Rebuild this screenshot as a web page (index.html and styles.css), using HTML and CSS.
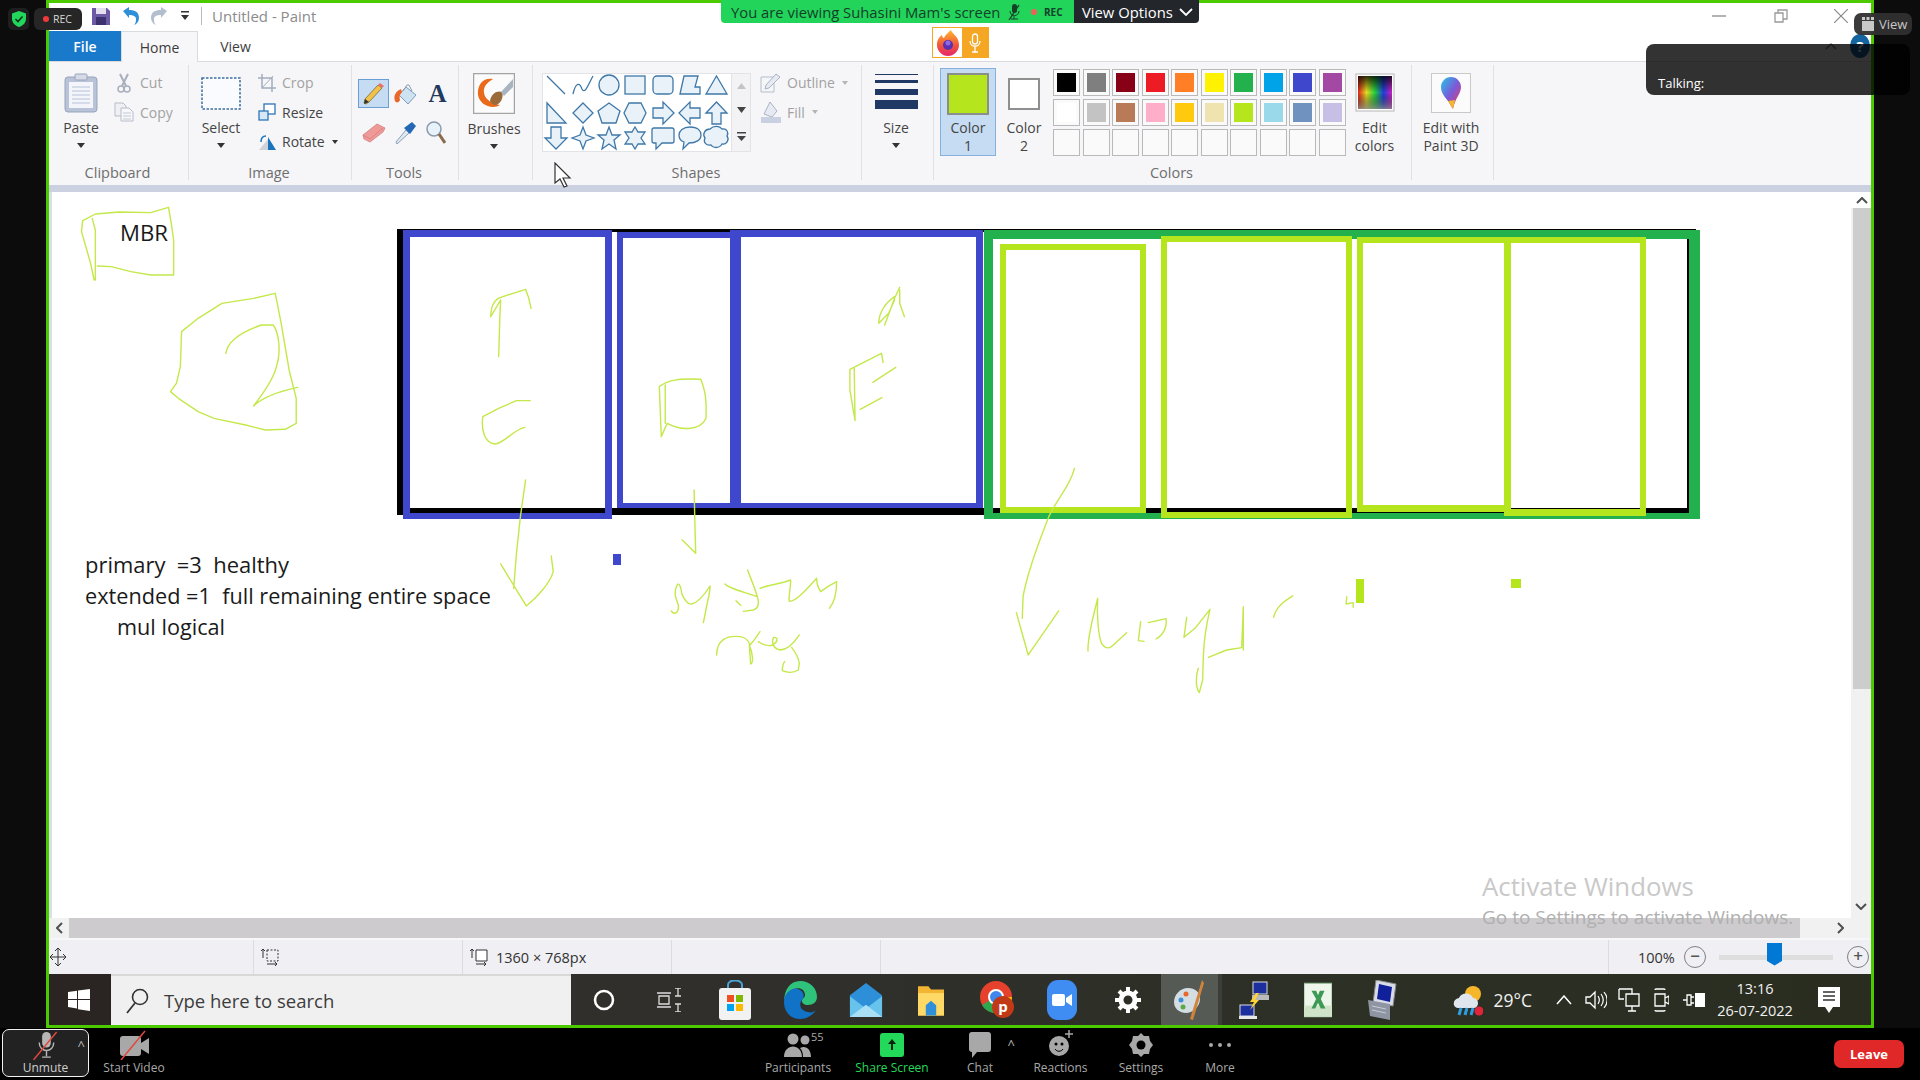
FILE: index.html
```html
<!DOCTYPE html>
<html lang="en">
<head>
    <meta charset="UTF-8">
    <title>Zoom - Untitled - Paint</title>
    <link rel="stylesheet" href="styles.css">
</head>
<body>
<div class="page">
    <div class="screen">
        <div class="titlebar">
            <svg class="qat-save" width="18" height="18" viewBox="0 0 18 18"><path d="M0 1h15l3 3v14H0z" fill="#6d5aa6"/><rect x="4" y="1" width="10" height="6" fill="#e4e0f0"/><rect x="4" y="10" width="10" height="8" fill="#3d3170"/></svg>
            <svg class="qat-undo" width="18" height="18" viewBox="0 0 18 18"><path d="M1 4l6-4v3c6 0 10 2 10 8 0 3-2 6-5 7 2-2 2-4 2-6 0-3-3-4-7-4v3z" fill="#2f8fd8"/></svg>
            <svg class="qat-redo" width="18" height="18" viewBox="0 0 18 18"><path d="M17 4l-6-4v3C5 3 1 5 1 11c0 3 2 6 5 7-2-2-2-4-2-6 0-3 3-4 7-4v3z" fill="#b3bfcf"/></svg>
            <svg class="qat-more" width="8" height="10" viewBox="0 0 8 10"><path d="M0 0h8v1.5H0zM0 4h8L4 9z" fill="#333"/></svg>
            <span class="title-sep"></span>
            <span class="title-text">Untitled - Paint</span>
            <div class="window-btns">
                <div class="window-btn window-min"><svg width="14" height="14" viewBox="0 0 14 14"><path d="M0 7h14" stroke="#9a9a9a" stroke-width="1.5"/></svg></div>
                <div class="window-btn"><svg width="14" height="14" viewBox="0 0 14 14"><path d="M1 4h8v9H1zM4 4V1h9v9H9" fill="none" stroke="#9a9a9a" stroke-width="1.3"/></svg></div>
                <div class="window-btn"><svg width="14" height="14" viewBox="0 0 14 14"><path d="M0 0l14 14M14 0L0 14" stroke="#8a8a8a" stroke-width="1.2"/></svg></div>
            </div>
        </div>

        <div class="tabs">
            <div class="tab tab-file">File</div>
            <div class="tab tab-home">Home</div>
            <div class="tab tab-view">View</div>
            <svg class="ribbon-collapse" width="12" height="7" viewBox="0 0 12 7"><path d="M1 6l5-5 5 5" fill="none" stroke="#777" stroke-width="1.3"/></svg>
            <div class="help">?</div>
        </div>

        <div class="ribbon">
            <div class="group group-clipboard">
                <div class="group-body">
                    <div class="big big-clipboard">
                        <svg width="34" height="40" viewBox="0 0 34 40"><rect x="1" y="4" width="32" height="35" rx="3" fill="#b9c3d8" stroke="#98a4bd"/><rect x="5" y="9" width="24" height="26" fill="#f3f5fa"/><path d="M8 14h18M8 18h18M8 22h18M8 26h18M8 30h18" stroke="#b7c2d8"/><rect x="11" y="1" width="12" height="6" rx="1" fill="#d5dae6" stroke="#98a4bd"/></svg>
                        <span class="big-label">Paste</span>
                        <span class="caret"></span>
                    </div>
                    <div class="small-list list-clipboard">
                        <div class="small off"><svg width="20" height="20" viewBox="0 0 20 20"><path d="M6 1l6 12M14 1L8 13" stroke="#a9afbb" stroke-width="2"/><circle cx="7" cy="16" r="3" fill="none" stroke="#a9afbb" stroke-width="1.5"/><circle cx="13" cy="16" r="3" fill="none" stroke="#a9afbb" stroke-width="1.5"/></svg>Cut</div>
                        <div class="small off"><svg width="20" height="20" viewBox="0 0 20 20"><path d="M1 1h8l3 3v10H1z" fill="#eef0f4" stroke="#b6bcc8"/><path d="M7 6h8l4 4v9H7z" fill="#f7f8fa" stroke="#b6bcc8"/><path d="M9 11h8M9 14h8M9 17h8" stroke="#c4c9d3"/></svg>Copy</div>
                    </div>
                </div>
                <div class="group-label">Clipboard</div>
            </div>

            <div class="group group-image">
                <div class="group-body">
                    <div class="big big-select">
                        <svg width="40" height="40" viewBox="0 0 40 40"><rect x="1" y="5" width="38" height="31" fill="#f9fbfe" stroke="#3f6f9f" stroke-width="1.5" stroke-dasharray="2.5 1.5"/></svg>
                        <span class="big-label">Select</span>
                        <span class="caret"></span>
                    </div>
                    <div class="small-list list-image">
                        <div class="small off"><svg width="18" height="18" viewBox="0 0 18 18"><path d="M4 0v14h14M0 4h14v14" fill="none" stroke="#a3adbb" stroke-width="1.5"/><path d="M15 2L4 14" stroke="#a3adbb"/></svg>Crop</div>
                        <div class="small"><svg width="18" height="18" viewBox="0 0 18 18"><rect x="6" y="1" width="11" height="10" fill="#fff" stroke="#2e75b6" stroke-width="1.3"/><rect x="1" y="8" width="9" height="9" fill="#d6e8f7" stroke="#2e75b6" stroke-width="1.3"/></svg>Resize</div>
                        <div class="small"><svg width="18" height="18" viewBox="0 0 18 18"><path d="M1 17L11 5v12z" fill="#cfd3d8"/><path d="M10 4l8 13h-8z" fill="#1c75bc"/><path d="M3 9c0-4 2-6 5-6" fill="none" stroke="#1c75bc" stroke-width="1.5"/></svg>Rotate<span class="caret caret-inline"></span></div>
                    </div>
                </div>
                <div class="group-label">Image</div>
            </div>

            <div class="group group-tools">
                <div class="group-body">
                    <div class="tool-grid">
                        <div class="tool tool-on"><svg width="24" height="24" viewBox="0 0 24 24"><path d="M4 22l-2-1 1-4L16 3l4 3L7 20z" fill="#f0c24a" stroke="#7d6a35" stroke-width=".8"/><path d="M16 3l2-2 4 3-2 2z" fill="#e8706a"/><path d="M2 22l1-5 4 3z" fill="#333"/></svg></div>
                        <div class="tool"><svg width="24" height="24" viewBox="0 0 24 24"><path d="M12 5l10 8-8 9-9-9z" fill="#cfe2f2" stroke="#7a9dbd"/><path d="M9 9l4-6 2 0 3 6" fill="none" stroke="#8a9bb0"/><path d="M1 19C-1 14 2 9 7 7l1 3C6 12 5 15 6 18c-1 3-4 3-5 1z" fill="#e8672a"/></svg></div>
                        <div class="tool"><span class="text-tool">A</span></div>
                        <div class="tool"><svg width="24" height="20" viewBox="0 0 24 20"><path d="M1 12L15 1l8 4-2 4L8 19l-6-3z" fill="#f09a98" stroke="#d27d7d" stroke-width=".8"/><path d="M1 12l7 4 13-11" fill="none" stroke="#d27d7d" stroke-width=".8"/></svg></div>
                        <div class="tool"><svg width="22" height="24" viewBox="0 0 22 24"><path d="M2 23l-1-2 10-12 3 3z" fill="#dfeaf2" stroke="#8aa0b5"/><path d="M9 7l8-6 4 4-6 8z" fill="#2268b4"/></svg></div>
                        <div class="tool tool-mag"><svg width="20" height="24" viewBox="0 0 20 24"><circle cx="8" cy="8" r="7" fill="#e8f2fa" stroke="#8a9aa8" stroke-width="1.5"/><path d="M13 13l6 9" stroke="#8a6a4a" stroke-width="3"/></svg></div>
                    </div>
                </div>
                <div class="group-label">Tools</div>
            </div>

            <div class="group group-brushes">
                <div class="group-body">
                    <div class="big big-brushes">
                        <svg width="42" height="41" viewBox="0 0 42 41"><rect x=".5" y=".5" width="41" height="40" fill="#fbfbfb" stroke="#a4a4a4" stroke-width="1.5"/><path d="M20 6C10 4 4 12 5 22c1 7 8 12 15 12 3 0 5-1 7-2-7-1-15-5-16-12-1-7 4-11 9-14z" fill="#ea6a1c"/><path d="M17 28c1-8 8-11 12-9 2 4-1 12-6 13-3 0-5-2-6-4z" fill="#9a6a3a"/><path d="M28 19L40 6v8L31 23z" fill="#a8b4c0"/></svg>
                        <span class="big-label">Brushes</span>
                        <span class="caret"></span>
                    </div>
                </div>
                <div class="group-label">&nbsp;</div>
            </div>

            <div class="group group-shapes">
                <div class="group-body">
                    <div class="gallery">
                        <svg width="189" height="79" viewBox="0 0 189 79" class="gallery-shapes">
                            <path d="M5 3L23 21M31 21C34 8 38 10 40 16C43 22 47 10 51 3"/>
                            <circle cx="67" cy="12" r="10"/>
                            <rect x="83" y="3" width="20" height="18"/>
                            <rect x="111" y="3" width="20" height="18" rx="4"/>
                            <path d="M138 21L142 3L156 3L153 14L158 14L158 21Z"/>
                            <path d="M174.5 3L185 21L164 21Z"/>
                            <path d="M5 30L5 50L24 50Z"/>
                            <path d="M41 30L51 40L41 50L31 40Z"/>
                            <path d="M67 30L78 38L74 50L60 50L56 38Z"/>
                            <path d="M87 30L99 30L104 40L99 50L87 50L82 40Z"/>
                            <path d="M111 35L121 35L121 29L132 40L121 51L121 45L111 45Z"/>
                            <path d="M158 35L148 35L148 29L137 40L148 51L148 45L158 45Z"/>
                            <path d="M164 40L174.5 29L185 40L179 40L179 51L170 51L170 40Z"/>
                            <path d="M9 54L19 54L19 65L25 65L14 76L3 65L9 65Z"/>
                            <path d="M41 54L44 62L52 65L44 68L41 76L38 68L30 65L38 62Z"/>
                            <path d="M67 54L70 62L78 62L72 67L74 76L67 71L60 76L62 67L56 62L64 62Z"/>
                            <path d="M93 54L96 59L103 59L99 65L103 71L96 71L93 76L90 71L83 71L87 65L83 59L90 59Z"/>
                            <path d="M112 55H130Q132 55 132 57V68Q132 70 130 70H120L114 76V70H112Q110 70 110 68V57Q110 55 112 55Z"/>
                            <path d="M148 54C156 54 159 58 159 62C159 67 154 70 147 70L141 76L142 69C139 68 137 65 137 62C137 58 141 54 148 54Z"/>
                            <path d="M168 56C172 52 178 53 180 56C185 55 187 60 185 63C188 67 184 72 180 71C177 76 171 75 169 72C164 73 161 69 163 65C160 61 163 56 168 56Z"/>
                        </svg>
                        <div class="gallery-scroll">
                            <svg width="9" height="6" viewBox="0 0 9 6"><path d="M4.5 0L9 6H0z" fill="#c4c4c4"/></svg>
                            <svg width="9" height="6" viewBox="0 0 9 6"><path d="M0 0h9L4.5 6z" fill="#444"/></svg>
                            <svg width="9" height="10" viewBox="0 0 9 10"><path d="M0 0h9v1.5H0zM0 4h9L4.5 9z" fill="#444"/></svg>
                        </div>
                    </div>
                    <div class="small-list list-shapes">
                        <div class="small off"><svg width="21" height="20" viewBox="0 0 21 20"><path d="M1 4h13v15H1z" fill="#f5f6f8" stroke="#b4bccb"/><path d="M5 16l1-4L16 1l4 3L9 15z" fill="#e6eaf2" stroke="#aab3c4"/></svg>Outline<span class="caret caret-inline caret-off"></span></div>
                        <div class="small off"><svg width="21" height="22" viewBox="0 0 21 22"><path d="M10 1l7 9-5 6-8-3z" fill="#e6eaf2" stroke="#aab3c4"/><rect x="1" y="16" width="20" height="6" fill="#c8d0e2"/></svg>Fill<span class="caret caret-inline caret-off"></span></div>
                    </div>
                </div>
                <div class="group-label">Shapes</div>
            </div>

            <div class="group group-size">
                <div class="group-body">
                    <div class="big big-size">
                        <div class="size-lines">
                            <span class="size-line size-1"></span>
                            <span class="size-line size-2"></span>
                            <span class="size-line size-3"></span>
                            <span class="size-line size-4"></span>
                        </div>
                        <span class="big-label">Size</span>
                        <span class="caret"></span>
                    </div>
                </div>
                <div class="group-label">&nbsp;</div>
            </div>

            <div class="group group-colors">
                <div class="group-body">
                    <div class="color-btn color-on">
                        <span class="swatch-big"></span>
                        <span class="big-label">Color<br>1</span>
                    </div>
                    <div class="color-btn">
                        <span class="swatch-small"></span>
                        <span class="big-label">Color<br>2</span>
                    </div>
                    <div class="palette">
                        <span class="cell"><i style="background:#000000"></i></span>
                        <span class="cell"><i style="background:#7f7f7f"></i></span>
                        <span class="cell"><i style="background:#880015"></i></span>
                        <span class="cell"><i style="background:#ed1c24"></i></span>
                        <span class="cell"><i style="background:#ff7f27"></i></span>
                        <span class="cell"><i style="background:#fff200"></i></span>
                        <span class="cell"><i style="background:#22b14c"></i></span>
                        <span class="cell"><i style="background:#00a2e8"></i></span>
                        <span class="cell"><i style="background:#3f48cc"></i></span>
                        <span class="cell"><i style="background:#a349a4"></i></span>
                        <span class="cell"><i style="background:#ffffff"></i></span>
                        <span class="cell"><i style="background:#c3c3c3"></i></span>
                        <span class="cell"><i style="background:#b97a57"></i></span>
                        <span class="cell"><i style="background:#ffaec9"></i></span>
                        <span class="cell"><i style="background:#ffc90e"></i></span>
                        <span class="cell"><i style="background:#efe4b0"></i></span>
                        <span class="cell"><i style="background:#b5e61d"></i></span>
                        <span class="cell"><i style="background:#99d9ea"></i></span>
                        <span class="cell"><i style="background:#7092be"></i></span>
                        <span class="cell"><i style="background:#c8bfe7"></i></span>
                        <span class="cell"></span><span class="cell"></span><span class="cell"></span><span class="cell"></span><span class="cell"></span>
                        <span class="cell"></span><span class="cell"></span><span class="cell"></span><span class="cell"></span><span class="cell"></span>
                    </div>
                    <div class="big big-edit">
                        <svg width="40" height="40" viewBox="0 0 40 40"><defs><linearGradient id="hues" x1="0" x2="1" y1="0" y2="0"><stop offset="0" stop-color="#e02020"/><stop offset=".25" stop-color="#e8e020"/><stop offset=".5" stop-color="#20d040"/><stop offset=".75" stop-color="#2040e0"/><stop offset="1" stop-color="#d020c0"/></linearGradient><linearGradient id="shade" x1="0" x2="0" y1="0" y2="1"><stop offset="0" stop-color="#000" stop-opacity=".8"/><stop offset=".5" stop-color="#000" stop-opacity="0"/><stop offset="1" stop-color="#888" stop-opacity=".8"/></linearGradient></defs><rect x="1" y="1" width="38" height="37" fill="#fff" stroke="#b5b5b5"/><rect x="3" y="3" width="34" height="33" fill="url(#hues)"/><rect x="3" y="3" width="34" height="33" fill="url(#shade)"/></svg>
                        <span class="big-label">Edit<br>colors</span>
                    </div>
                </div>
                <div class="group-label">Colors</div>
            </div>

            <div class="group group-paint3d">
                <div class="group-body">
                    <div class="big big-paint3d">
                        <svg width="40" height="40" viewBox="0 0 40 40"><defs><linearGradient id="drop" x1="0" x2="1" y1="0" y2="1"><stop offset="0" stop-color="#22c8e8"/><stop offset=".5" stop-color="#7a5ad8"/><stop offset="1" stop-color="#f03a5a"/></linearGradient></defs><rect x=".5" y=".5" width="39" height="39" fill="#fbfbfb" stroke="#c9c9c9"/><path d="M20 4c6 0 10 5 10 10 0 7-6 11-8 22-2-3-3-5-5-8-3-4-7-8-7-14C10 9 14 4 20 4z" fill="url(#drop)"/><path d="M17 28l5 8 2-9z" fill="#f6b62a"/></svg>
                        <span class="big-label">Edit with<br>Paint 3D</span>
                    </div>
                </div>
                <div class="group-label">&nbsp;</div>
            </div>
        </div>

        <div class="ribbon-edge"></div>

        <div class="canvas-row">
            <div class="canvas">
                <svg class="drawing" width="1799" height="726" viewBox="52 192 1799 726">
                    <rect class="fill-black" x="397" y="229" width="1299" height="286"/>
                    <rect class="fill-white" x="407" y="232" width="1280" height="276"/>

                    <path class="fill-blue" fill-rule="evenodd" d="M403 230H612V519H403ZM410 237V508H605V237Z"/>
                    <path class="fill-blue" fill-rule="evenodd" d="M617 232H741V508H617ZM623 238V503H730V238Z"/>
                    <path class="fill-blue" fill-rule="evenodd" d="M730 230H983V508H730ZM741 237V503H976V237Z"/>
                    <rect class="fill-black" x="410" y="508" width="195" height="5"/>
                    <path class="fill-green" fill-rule="evenodd" d="M984 230H1700V519H984ZM993 239V513H1689V239Z"/>
                    <rect class="fill-black" x="993" y="508" width="696" height="5"/>
                    <path class="fill-lime" fill-rule="evenodd" d="M1000 244H1146V513H1000ZM1006 250V507H1140V250Z"/>
                    <path class="fill-lime" fill-rule="evenodd" d="M1161 236H1352V518H1161ZM1167 242V512H1346V242Z"/>
                    <path class="fill-lime" fill-rule="evenodd" d="M1357 237H1510V512H1357ZM1363 243V505H1504V243Z"/>
                    <path class="fill-lime" fill-rule="evenodd" d="M1504 237H1646V516H1504ZM1511 243V509H1640V243Z"/>
                    <rect class="fill-blue" x="613" y="554" width="8" height="11"/>
                    <rect class="fill-lime" x="1356" y="579" width="8" height="24"/>
                    <rect class="fill-lime" x="1511" y="579" width="10" height="9"/>

                    <g class="ink" transform="translate(40 190) scale(.3954 .3333)">
                        <path d="M137 270L128 220L105 125L108 92L140 72L200 66L280 68L325 52L332 100L338 150L338 255L280 255L230 245L180 230L145 228M132 85L140 120L140 270"/>
                        <path d="M595 310L540 325L460 340L400 385L358 425L355 530L345 580L330 605L350 625L400 665L440 685L520 705L570 720L620 718L648 700L648 625L630 540L610 400L595 310"/>
                        <path d="M470 490C475 450 510 425 560 405L590 405C605 430 610 490 598 530C590 570 565 610 540 648C560 625 600 605 652 592"/>
                        <path d="M1160 500L1163 380L1165 330M1140 380C1140 340 1155 325 1165 322L1228 298L1235 320L1242 355M1140 380L1165 330"/>
                        <path d="M1240 632L1205 632L1160 655L1120 680C1115 720 1125 760 1150 762C1175 760 1195 720 1226 712"/>
                        <path d="M1228 870L1215 980L1205 1090L1198 1195M1165 1122L1200 1190L1230 1248C1255 1225 1290 1180 1298 1145L1293 1098"/>
                    </g>
                    <g class="ink" transform="translate(600 210) scale(.3954 .3333)">
                        <path d="M155 680L150 530C170 510 200 505 255 508C265 540 270 560 268 625C255 660 210 665 170 640L155 680M165 525L165 640"/>
                        <path d="M238 840L240 940L242 1030L208 990"/>
                        <path d="M758 232L745 265L720 345M745 260C720 280 705 310 705 340L730 310L745 270M758 240L758 280L770 320"/>
                        <path d="M645 632L632 540L632 478L712 430L716 458M643 475L645 630M690 517L748 472M658 598L713 563"/>
                        <path d="M1200 775C1190 825 1160 860 1135 920C1105 1010 1080 1090 1070 1160L1068 1225M1053 1208L1083 1335L1160 1203"/>
                    </g>
                    <g class="ink" transform="translate(660 560) scale(.3333)">
                        <path d="M34 153C42 165 58 160 55 135C48 115 40 100 50 78C55 65 62 75 65 100C72 120 85 135 95 132C110 128 130 110 150 78C152 95 140 130 135 165L130 188"/>
                        <path d="M263 30C270 50 285 85 292 110C298 130 295 145 280 150L250 154M228 122L242 136M195 72C205 85 250 95 292 110M300 85C325 75 360 72 392 60C392 85 385 110 388 124C405 125 430 100 470 55C470 70 475 85 482 95C495 85 510 75 530 65C530 95 525 125 508 145"/>
                        <path d="M170 285C170 240 200 225 240 230C258 232 265 240 270 255C280 245 290 230 300 215M268 255L272 312C280 310 280 285 268 255M295 245C310 255 325 260 338 255C355 245 355 232 342 232C335 240 335 265 360 270C385 270 405 245 418 225M395 262C405 275 415 290 418 310L415 330C400 340 380 338 367 332C367 320 370 310 374 305"/>
                    </g>
                    <g class="ink" transform="translate(1080 580) scale(.3333)">
                        <path d="M24 213C22 170 40 110 53 55C50 100 55 170 65 190C78 210 90 205 100 195L140 158"/>
                        <path d="M182 125L175 182L192 184M205 128L258 116C262 140 250 165 228 177"/>
                        <path d="M320 112L312 172L345 145L390 88C380 130 372 170 370 230L368 300L358 338C345 320 348 285 355 265M385 232L440 210L485 203L490 80L490 210"/>
                    </g>
                    <g class="ink" transform="translate(1180 210) scale(.3571 .3333)">
                        <path d="M262 1222C270 1190 290 1175 316 1158"/>
                        <path d="M467 1160L465 1182L485 1178L485 1192"/>
                    </g>

                    <text class="note" x="120" y="241" textLength="48" lengthAdjust="spacingAndGlyphs">MBR</text>
                    <text class="note" xml:space="preserve" x="85" y="573" textLength="204" lengthAdjust="spacingAndGlyphs">primary  =3  healthy</text>
                    <text class="note" xml:space="preserve" x="85" y="604" textLength="406" lengthAdjust="spacingAndGlyphs">extended =1  full remaining entire space</text>
                    <text class="note" x="117" y="635" textLength="108" lengthAdjust="spacingAndGlyphs">mul logical</text>
                </svg>
            </div>
            <div class="vscroll">
                <div class="vscroll-top"><svg width="12" height="7" viewBox="0 0 12 7"><path d="M1 6l5-5 5 5" fill="none" stroke="#505050" stroke-width="2"/></svg></div>
                <div class="vscroll-thumb"></div>
                <div class="vscroll-rest"></div>
                <div class="vscroll-end"><svg width="12" height="7" viewBox="0 0 12 7"><path d="M1 1l5 5 5-5" fill="none" stroke="#505050" stroke-width="2"/></svg></div>
            </div>
        </div>

        <div class="hscroll">
            <div class="hscroll-start"><svg width="7" height="12" viewBox="0 0 7 12"><path d="M6 1L1 6l5 5" fill="none" stroke="#505050" stroke-width="2"/></svg></div>
            <div class="hscroll-thumb"></div>
            <div class="hscroll-end"><svg width="7" height="12" viewBox="0 0 7 12"><path d="M1 1l5 5-5 5" fill="none" stroke="#505050" stroke-width="2"/></svg></div>
        </div>

        <div class="statusbar">
            <div class="status-cell status-a"><svg width="16" height="18" viewBox="0 0 16 18"><path d="M8 0v18M0 9h16M5 3l3-3 3 3M5 15l3 3 3-3M3 6L0 9l3 3M13 6l3 3-3 3" fill="none" stroke="#333"/></svg></div>
            <div class="status-cell status-b"><svg width="18" height="18" viewBox="0 0 18 18"><path d="M6 2h11v11H6z" fill="none" stroke="#333" stroke-dasharray="2 1.5"/><path d="M2 10V1M0 3l2-2 2 2M6 16h10M14 14l2 2-2 2" fill="none" stroke="#333"/></svg></div>
            <div class="status-cell status-b"><svg width="18" height="18" viewBox="0 0 18 18"><path d="M6 2h11v11H6z" fill="#fff" stroke="#333"/><path d="M2 10V1M0 3l2-2 2 2M6 16h10M14 14l2 2-2 2" fill="none" stroke="#333"/></svg><span class="status-text">1360 × 768px</span></div>
            <div class="status-cell status-b"></div>
            <div class="status-cell status-c"></div>
            <div class="status-zoom">
                <span class="zoom-pct">100%</span>
                <span class="zoom-circle">−</span>
                <div class="zoom-track"><span class="zoom-thumb"></span></div>
                <span class="zoom-circle">+</span>
            </div>
        </div>

        <div class="taskbar">
            <div class="start"><svg width="22" height="22" viewBox="0 0 22 22"><path d="M0 3l9-1.3V10H0zM10 1.500L22 0v10H10zM0 11h9v8.500L0 18zM10 11h12v11l-12-1.700z" fill="#fff"/></svg></div>
            <div class="search">
                <svg width="24" height="26" viewBox="0 0 24 26"><circle cx="15" cy="9" r="7.500" fill="none" stroke="#333" stroke-width="1.600"/><path d="M10 15L2 25" stroke="#333" stroke-width="1.800"/></svg>
                <span class="search-text">Type here to search</span>
            </div>
            <div class="slot"><svg width="22" height="22" viewBox="0 0 22 22"><circle cx="11" cy="11" r="9" fill="none" stroke="#fff" stroke-width="2.500"/></svg></div>
            <div class="slot"><svg width="24" height="24" viewBox="0 0 24 24"><path d="M0 5h14M0 19h14M2 8h10v8H2zM18 0h6M18 8h6M18 16h6M18 24h6M21 0v8M21 16v8" fill="none" stroke="#ddd" stroke-width="1.300"/></svg></div>
            <div class="slot"><svg width="32" height="40" viewBox="0 0 32 40"><path d="M9 10V5c0-6 14-6 14 0v5" fill="none" stroke="#4ba3d8" stroke-width="2"/><rect y="8" width="32" height="32" rx="3" fill="#f2f2f2"/><rect x="8" y="15" width="7" height="7" fill="#f25022"/><rect x="17" y="15" width="7" height="7" fill="#7fba00"/><rect x="8" y="24" width="7" height="7" fill="#00a4ef"/><rect x="17" y="24" width="7" height="7" fill="#ffb900"/></svg></div>
            <div class="slot"><svg width="34" height="38" viewBox="0 0 34 38"><path d="M17 0c10 0 17 7 17 16 0 5-4 8-9 8-4 0-6-2-6-4 0-3 3-3 3-6 0-5-5-8-11-6C5 10 1 16 1 21 1 9 7 0 17 0z" fill="#2fc27a"/><path d="M1 21c0-9 8-15 14-13 6 2 7 7 4 11-4 5-1 11 6 12 3 1 6 0 8-2-3 5-9 9-16 9C7 38 1 30 1 21z" fill="#1073c8"/></svg></div>
            <div class="slot"><svg width="34" height="34" viewBox="0 0 34 36"><path d="M0 13L17 0l17 13v23H0z" fill="#2d8fd8"/><path d="M0 14l17 13 17-13v22H0z" fill="#67c3ec"/><path d="M0 36l17-13 17 13z" fill="#a9e0f6"/></svg></div>
            <div class="slot"><svg width="26" height="34" viewBox="0 0 30 36"><path d="M0 2h12l3 4h15v30H0z" fill="#f2b632"/><path d="M0 10h30v26H0z" fill="#ffd966"/><path d="M9 36V24l6-5 6 5v12z" fill="#2f8fd8"/></svg></div>
            <div class="slot"><svg width="34" height="38" viewBox="0 0 34 38"><circle cx="16" cy="16" r="16" fill="#e5412c"/><path d="M16 16L2 24A16 16 0 0 0 24 30z" fill="#2da84f"/><path d="M16 16h16a16 16 0 0 1-8 14z" fill="#fbbc05"/><circle cx="16" cy="16" r="7" fill="#3f87ed" stroke="#fff" stroke-width="2"/><circle cx="23" cy="26" r="11" fill="#c13a17"/><text class="chrome-p" x="23" y="31">p</text></svg></div>
            <div class="slot"><svg width="30" height="40" viewBox="0 0 30 40"><rect width="30" height="40" rx="11" fill="#3f8cf3"/><rect x="5" y="14" width="13" height="12" rx="2" fill="#fff"/><path d="M19 18l6-4v12l-6-4z" fill="#fff"/></svg></div>
            <div class="slot"><svg width="26" height="26" viewBox="0 0 26 26"><circle cx="13" cy="13" r="7" fill="none" stroke="#fff" stroke-width="5"/><path d="M13 0v5M13 21v5M0 13h5M21 13h5M4 4l3.500 3.500M18.500 18.500L22 22M22 4l-3.500 3.500M7.500 18.500L4 22" stroke="#fff" stroke-width="4"/></svg></div>
            <div class="slot-active"><svg width="30" height="40" viewBox="0 0 30 40"><path d="M14 8C6 8 0 15 0 22s6 11 12 11c6 0 14-6 14-14 0-7-5-11-12-11z" fill="#d4dde2"/><circle cx="7" cy="20" r="2.500" fill="#3f8fd8"/><circle cx="12" cy="14" r="2.500" fill="#e8672a"/><circle cx="9" cy="27" r="2.500" fill="#5aa84a"/><path d="M28 0l2 3-11 37-3-1z" fill="#d0843a"/></svg></div>
            <span class="task-sep"></span>
            <div class="slot-pin"><svg width="30" height="38" viewBox="0 0 30 38"><rect x="14" y="1" width="14" height="12" fill="#1b2f9e" stroke="#ddd"/><rect x="1" y="24" width="14" height="11" fill="#1b2f9e" stroke="#ddd"/><rect x="13" y="14" width="17" height="5" fill="#bbb"/><rect y="35" width="18" height="3" fill="#e8e8e8"/><path d="M17 12l-6 9h4l-4 8 9-10h-4l4-7z" fill="#ffd23a"/></svg></div>
            <div class="slot-pin"><svg width="28" height="36" viewBox="0 0 30 36"><rect width="30" height="36" fill="#eef5ea" stroke="#8ab88a"/><path d="M0 24h30v12H0z" fill="#cfe3c8"/><path d="M8 8h5l2 5 2-5h5l-4 9 5 10h-5l-3-6-3 6H8l5-10z" fill="#3c9a55"/></svg></div>
            <div class="slot-pin"><svg width="32" height="40" viewBox="0 0 32 40"><path d="M10 0l20 4-3 22-20-3z" fill="#d8dce8" stroke="#888"/><path d="M13 4l13 3-2 15-13-3z" fill="#10209a"/><path d="M2 20l22 4v16L4 36z" fill="#8f95a3"/><path d="M6 26l14 3M6 30l14 3" stroke="#c8ccd6"/></svg></div>
            <div class="slot-weather"><svg width="30" height="32" viewBox="0 0 30 32"><circle cx="20" cy="10" r="8" fill="#f6b62a"/><path d="M6 24c-7 0-7-9 0-10 2-6 12-6 14 0 6 0 7 9 1 10z" fill="#dfe6ee"/><path d="M8 24l-2 7M14 24l-2 7M20 24l-2 7" stroke="#2f9ee0" stroke-width="3"/><circle cx="26" cy="27" r="4.500" fill="#e0243a"/></svg></div>
            <span class="temp">29°C</span>
            <div class="slot-tray"><svg width="16" height="10" viewBox="0 0 16 10"><path d="M1 9l7-8 7 8" fill="none" stroke="#fff" stroke-width="1.500"/></svg></div>
            <div class="slot-tray"><svg width="22" height="22" viewBox="0 0 22 22"><path d="M1 8h4l5-5v16l-5-5H1z" fill="none" stroke="#fff" stroke-width="1.300"/><path d="M13 7c2 3 2 5 0 8M16 5c3 4 3 8 0 12M19 3c4 5 4 11 0 16" fill="none" stroke="#fff" stroke-width="1.200"/></svg></div>
            <div class="slot-tray"><svg width="22" height="24" viewBox="0 0 22 24"><path d="M1 1h13v5M1 1v10h5M8 6h13v12H8zM14 18v5M10 23h8" fill="none" stroke="#fff" stroke-width="1.300"/></svg></div>
            <div class="slot-tray"><svg width="16" height="24" viewBox="0 0 16 24"><path d="M2 6h10v12H2zM12 10l4-2v8l-4-2M2 2c0-1 1-1 1-1h8s1 0 1 1M2 22c0 1 1 1 1 1h8s1 0 1-1" fill="none" stroke="#fff" stroke-width="1.300"/></svg></div>
            <div class="slot-tray"><svg width="22" height="20" viewBox="0 0 22 20"><path d="M0 10h4M4 5h4v10H4zM8 7h3M8 13h3" fill="none" stroke="#fff" stroke-width="1.300"/><path d="M12 3h10v14H12z" fill="#fff"/></svg></div>
            <div class="clock"><span>13:16</span><span>26-07-2022</span></div>
            <div class="slot-notify"><svg width="22" height="26" viewBox="0 0 22 26"><path d="M0 0h22v20H15l-4 6-4-6H0z" fill="#fff"/><path d="M5 5h12M5 9h12M5 13h12" stroke="#333" stroke-width="1.300"/></svg></div>
        </div>
    </div>

    <div class="zoombar">
        <div class="zb-item zb-unmute">
            <svg width="32" height="30" viewBox="0 0 32 30"><rect x="12" y="1" width="9" height="16" rx="4.500" fill="#b5b5b5"/><path d="M9 12c0 11 15 11 15 0M16.500 20v6M12 27h9" fill="none" stroke="#b5b5b5" stroke-width="1.500"/><path d="M3 30L27 1" stroke="#e2483d" stroke-width="1.500"/></svg>
            <span class="zb-label zb-bright">Unmute</span>
            <span class="zb-caret">^</span>
        </div>
        <div class="zb-item">
            <svg width="32" height="30" viewBox="0 0 32 30"><rect x="2" y="6" width="21" height="20" rx="3" fill="#a8a8a8"/><path d="M23 13l8-5v16l-8-5z" fill="#a8a8a8"/><path d="M3 30L27 1" stroke="#e2483d" stroke-width="1.500"/></svg>
            <span class="zb-label">Start Video</span>
        </div>
        <div class="zb-spacer"></div>
        <div class="zb-item">
            <svg width="28" height="30" viewBox="0 0 28 30"><circle cx="9" cy="9" r="5.500" fill="#a8a8a8"/><circle cx="21" cy="10" r="4.500" fill="#a8a8a8"/><path d="M0 27c0-14 18-14 18 0zM19 27c0-4-1-7-3-9 5-3 11 0 11 9z" fill="#a8a8a8"/></svg>
            <span class="zb-count">55</span>
            <span class="zb-label">Participants</span>
        </div>
        <div class="zb-item zb-share">
            <svg width="24" height="30" viewBox="0 0 24 30"><rect y="3" width="24" height="24" rx="3" fill="#23d959"/><path d="M12 9l-4 5h3v6h2v-6h3z" fill="#06230f"/></svg>
            <span class="zb-label">Share Screen</span>
        </div>
        <div class="zb-item">
            <svg width="24" height="30" viewBox="0 0 24 30"><path d="M4 2h16a3 3 0 0 1 3 3v14a3 3 0 0 1-3 3H9l-5 6v-6a3 3 0 0 1-3-3V5a3 3 0 0 1 3-3z" fill="#a8a8a8"/></svg>
            <span class="zb-label">Chat</span>
            <span class="zb-caret zb-caret-chat">^</span>
        </div>
        <div class="zb-item">
            <svg width="26" height="30" viewBox="0 0 26 30"><circle cx="11" cy="16" r="10" fill="#a8a8a8"/><circle cx="8" cy="14" r="1.500" fill="#000"/><circle cx="14" cy="14" r="1.500" fill="#000"/><path d="M7 19c2 3 6 3 8 0" stroke="#000" fill="none"/><path d="M21 0v8M17 4h8" stroke="#a8a8a8" stroke-width="1.500"/></svg>
            <span class="zb-label">Reactions</span>
        </div>
        <div class="zb-item">
            <svg width="24" height="30" viewBox="0 0 24 30"><path d="M12 3l3 3 5 0 1 5 3 4-3 4-1 5-5 0-3 3-3-3-5 0-1-5-3-4 3-4 1-5 5 0z" fill="#a8a8a8"/><circle cx="12" cy="15" r="4.500" fill="#000"/></svg>
            <span class="zb-label">Settings</span>
        </div>
        <div class="zb-item">
            <svg width="24" height="30" viewBox="0 0 24 30"><circle cx="3" cy="15" r="2" fill="#a8a8a8"/><circle cx="12" cy="15" r="2" fill="#a8a8a8"/><circle cx="21" cy="15" r="2" fill="#a8a8a8"/></svg>
            <span class="zb-label">More</span>
        </div>
        <div class="leave">Leave</div>
    </div>

    <div class="shield"><svg width="14" height="16" viewBox="0 0 14 16"><path d="M7 0l7 2.500v5C14 12 11 14.500 7 16 3 14.500 0 12 0 7.500v-5z" fill="#22d65c"/><path d="M3.500 8l2.500 2.500 4.500-5" fill="none" stroke="#07301a" stroke-width="1.600"/></svg></div>
    <div class="rec-pill"><span class="rec-dot"></span>REC</div>

    <div class="viewing">
        <div class="viewing-msg">
            <span class="viewing-text">You are viewing Suhasini Mam's screen</span>
            <svg width="12" height="16" viewBox="0 0 12 16"><rect x="4" y="0" width="5" height="9" rx="2.500" fill="#17402a"/><path d="M2 7c0 6 9 6 9 0M6 12v3M3 15h7" fill="none" stroke="#17402a"/><path d="M1 16L11 1" stroke="#17402a" stroke-width="1.300"/></svg>
            <span class="viewing-dot"></span>
            <span class="viewing-rec">REC</span>
        </div>
        <div class="view-options">View Options
            <svg width="14" height="8" viewBox="0 0 14 8"><path d="M1 1l6 6 6-6" fill="none" stroke="#fff" stroke-width="1.800"/></svg>
        </div>
    </div>

    <div class="mic-pop">
        <div class="mic-pop-app"><svg width="22" height="26" viewBox="0 0 22 26"><defs><linearGradient id="fox" x1="0" x2="0" y1="0" y2="1"><stop offset="0" stop-color="#ffb52e"/><stop offset=".6" stop-color="#f0543a"/><stop offset="1" stop-color="#e5266e"/></linearGradient></defs><path d="M14 0c1 4 8 6 8 15 0 6-5 11-11 11S0 21 0 15C0 10 2 7 5 5c0 2 1 3 2 3 1-3 4-5 7-8z" fill="url(#fox)"/><circle cx="11" cy="15" r="5" fill="#5b2fb0"/><circle cx="11" cy="13" r="2.500" fill="#8e6ae0"/></svg></div>
        <div class="mic-pop-mic"><svg width="12" height="20" viewBox="0 0 12 20"><rect x="3.500" y="1" width="5" height="10" rx="2.500" fill="none" stroke="#fff" stroke-width="1.300"/><path d="M1 8c0 7 10 7 10 0M6 14v5M3 19h6" fill="none" stroke="#fff" stroke-width="1.300"/></svg></div>
    </div>

    <div class="view-btn"><svg width="12" height="14" viewBox="0 0 12 14"><rect y="4" width="12" height="10" fill="#c8c8c8"/><path d="M0 0h3v3H0zM4.500 0h3v3h-3zM9 0h3v3H9z" fill="#c8c8c8"/></svg>View</div>
    <div class="talking">Talking:</div>

    <svg class="pointer" width="18" height="26" viewBox="0 0 18 26"><path d="M1 1v20l5-4 4 8 3-1-4-8h7z" fill="#fff" stroke="#333" stroke-width="1.200"/></svg>

    <div class="activate">
        <div class="activate-title">Activate Windows</div>
        <div class="activate-sub">Go to Settings to activate Windows.</div>
    </div>
</div>
</body>
</html>
```

FILE: styles.css
```css
* {
    box-sizing: border-box;
}
body {
    margin: 0;
    background: #000;
    font-family: "Open Sans", sans-serif;
}
.page {
    position: relative;
    width: 1920px;
    height: 1080px;
    overflow: hidden;
    background: #0c0c0c;
}

/* shared screen, framed in green */
.screen {
    display: flex;
    flex-direction: column;
    width: 1828px;
    height: 1028px;
    margin-left: 46px;
    border: 3px solid #4dc900;
    background: #fff;
}
.titlebar {
    display: flex;
    align-items: center;
    height: 28px;
    padding: 0 0 3px 43px;
    background: #fff;
}
.qat-undo {
    margin-left: 12px;
}
.qat-redo {
    margin-left: 10px;
}
.qat-more {
    margin-left: 13px;
}
.title-sep {
    width: 1px;
    height: 18px;
    margin-left: 12px;
    background: #bbb;
}
.title-text {
    margin-left: 10px;
    font-size: 15px;
    color: #8b8b8b;
}
.window-btns {
    display: flex;
    margin-left: auto;
}
.window-btn {
    display: flex;
    justify-content: center;
    width: 60px;
}
.window-min {
    padding-right: 4px;
}

.tabs {
    display: flex;
    align-items: stretch;
    height: 31px;
    background: #fff;
    border-bottom: 1px solid #dadbdc;
    font-size: 14px;
    color: #3c3c3c;
}
.tab {
    display: flex;
    align-items: center;
    justify-content: center;
}
.tab-file {
    width: 72px;
    background: #1979ca;
    color: #fff;
    font-weight: 600;
}
.tab-home {
    width: 77px;
    height: 31px;
    background: #f7f7f9;
    border: 1px solid #dadbdc;
    border-bottom: none;
}
.tab-view {
    width: 75px;
}
.ribbon-collapse {
    align-self: center;
    margin-left: auto;
}
.help {
    align-self: center;
    width: 20px;
    height: 24px;
    margin: 0 1px 0 13px;
    border-radius: 50%;
    background: #14659f;
    color: #fff;
    font-size: 15px;
    font-weight: 700;
    line-height: 24px;
    text-align: center;
}

/* ribbon */
.ribbon {
    display: flex;
    height: 123px;
    padding: 3px 0 5px;
    background: #f6f6f8;
    font-size: 14px;
    color: #444;
}
.group {
    display: flex;
    flex-direction: column;
    border-right: 1px solid #e1e1e4;
}
.group-body {
    display: flex;
    flex: 1;
    align-items: flex-start;
}
.group-label {
    height: 14px;
    padding-right: 2px;
    font-size: 14.5px;
    line-height: 14px;
    text-align: center;
    color: #6e6e6e;
}
.group-clipboard { width: 140px; }
.group-image { width: 163px; }
.group-tools { width: 107px; }
.group-brushes { width: 74px; }
.group-shapes { width: 329px; }
.group-size { width: 72px; }
.group-colors { width: 478px; }
.group-paint3d { width: 82px; }

.big {
    display: flex;
    flex-direction: column;
    align-items: center;
    padding-top: 8px;
    flex-shrink: 0;
}
.big-label {
    margin-top: 6px;
    line-height: 18px;
    text-align: center;
    white-space: nowrap;
}
.caret {
    width: 0;
    height: 0;
    margin-top: 6px;
    border-left: 4px solid transparent;
    border-right: 4px solid transparent;
    border-top: 5px solid #333;
}
.caret-inline {
    margin: 0 0 0 1px;
    border-left-width: 3.5px;
    border-right-width: 3.5px;
    border-top-width: 4px;
}
.caret-off {
    border-top-color: #b5b5b5;
}
.big-clipboard,
.big-select {
    width: 64px;
}
.big-brushes {
    width: 70px;
}
.big-size {
    width: 68px;
}
.big-edit {
    width: 58px;
}
.big-paint3d {
    width: 78px;
}
.small-list {
    display: flex;
    flex-direction: column;
    padding-top: 3px;
}
.small {
    display: flex;
    align-items: center;
    gap: 6px;
    height: 29.5px;
    white-space: nowrap;
}
.off {
    color: #a2a2a2;
}
.list-clipboard {
    margin-left: 1px;
}
.list-image {
    margin-left: 5px;
}
.list-shapes {
    margin-left: 9px;
}

.tool-grid {
    display: grid;
    grid-template-columns: repeat(3, 31px);
    grid-template-rows: 29px 29px;
    column-gap: 1px;
    row-gap: 10px;
    margin: 14px 0 0 6px;
}
.tool {
    display: flex;
    align-items: center;
    justify-content: center;
}
.tool-on {
    background: #c5dcf3;
    border: 1px solid #6a9fd6;
}
.tool-mag {
    padding-right: 4px;
}
.text-tool {
    font-family: "Liberation Serif", serif;
    font-size: 25px;
    font-weight: 700;
    color: #223a5e;
}

.gallery {
    display: flex;
    margin: 8px 0 0 9px;
    border: 1px solid #e2e3e6;
    height: 79px;
    background: #fff;
}
.gallery-shapes {
    flex-shrink: 0;
    margin: -1px 0 0 -1px;
}
.gallery-shapes path,
.gallery-shapes circle,
.gallery-shapes rect {
    fill: #e9f2f9;
    stroke: #3f78a8;
    stroke-width: 1.3;
}
.gallery-shapes path:first-child {
    fill: none;
}
.gallery-scroll {
    display: flex;
    flex-direction: column;
    align-items: center;
    justify-content: space-around;
    width: 19px;
    background: #f3f3f5;
    border-left: 1px solid #e2e3e6;
}

.size-lines {
    display: flex;
    flex-direction: column;
    width: 43px;
    height: 40px;
}
.size-line {
    display: block;
    background: #1f3864;
}
.size-1 { height: 1px; margin-top: 1px; }
.size-2 { height: 3px; margin-top: 5px; }
.size-3 { height: 6px; margin-top: 6px; }
.size-4 { height: 9px; margin-top: 5px; }

.color-btn {
    display: flex;
    flex-direction: column;
    align-items: center;
    width: 56px;
    height: 88px;
    margin-top: 3px;
    padding-top: 4px;
    flex-shrink: 0;
    border: 1px solid transparent;
}
.color-btn .big-label {
    margin-top: 4px;
}
.color-on {
    margin-left: 6px;
    background: #c5dcf3;
    border-color: #85b1dd;
}
.swatch-big {
    width: 42px;
    height: 42px;
    background: #b5e61d;
    border: 2px solid #8a8f8c;
}
.swatch-small {
    width: 32px;
    height: 32px;
    margin-top: 5px;
    margin-bottom: 5px;
    background: #fff;
    border: 2px solid #8f8f8f;
}
.palette {
    display: grid;
    grid-template-columns: repeat(10, 27px);
    grid-auto-rows: 27px;
    column-gap: 2.5px;
    row-gap: 3px;
    margin: 4px 0 0 1px;
    flex-shrink: 0;
}
.cell {
    display: block;
    padding: 3px;
    background: #fafafa;
    border: 1px solid #b9b9b9;
}
.cell i {
    display: block;
    width: 100%;
    height: 100%;
}

.ribbon-edge {
    height: 7px;
    background: #cbd1e0;
}

/* canvas */
.canvas-row {
    display: flex;
    height: 726px;
}
.canvas {
    flex: 1;
    background: #fff;
    border-left: 3px solid #d8dfe9;
}
.drawing {
    display: block;
}
.fill-black { fill: #000; }
.fill-white { fill: #fff; }
.fill-blue { fill: #3f48cc; }
.fill-green { fill: #22b14c; }
.fill-lime { fill: #b5e61d; }
.ink {
    fill: none;
    stroke: #c4e84a;
    stroke-width: 1.4;
    stroke-linejoin: round;
    stroke-linecap: round;
}
.ink path {
    vector-effect: non-scaling-stroke;
}
.note {
    font-family: "Open Sans", sans-serif;
    font-size: 21px;
    fill: #1a1a1a;
}
.vscroll {
    display: flex;
    flex-direction: column;
    width: 20px;
    background: #f1f1f1;
}
.vscroll-top {
    display: flex;
    align-items: center;
    justify-content: center;
    height: 16px;
    padding-left: 2px;
    background: #fff;
}
.vscroll-thumb {
    height: 481px;
    margin-left: 2px;
    background: #cdcdcd;
}
.vscroll-rest {
    flex: 1;
}
.vscroll-end {
    display: flex;
    align-items: center;
    justify-content: center;
    height: 24px;
}
.hscroll {
    display: flex;
    height: 20px;
    background: #f1f1f1;
}
.hscroll-start {
    display: flex;
    align-items: center;
    justify-content: center;
    width: 20px;
}
.hscroll-thumb {
    flex: 1;
    background: #cdcbce;
}
.hscroll-end {
    display: flex;
    align-items: center;
    justify-content: center;
    width: 71px;
    padding-left: 10px;
}

/* status bar */
.statusbar {
    display: flex;
    height: 36px;
    background: #f0f0f4;
    border-top: 2px solid #f7f7f9;
    font-size: 14.5px;
    color: #333;
}
.status-cell {
    display: flex;
    align-items: center;
    border-right: 1px solid #dcdcdf;
}
.status-a {
    width: 205px;
    padding-left: 1px;
}
.status-b {
    width: 209px;
    padding-left: 7px;
}
.status-c {
    width: 728px;
}
.status-text {
    margin-left: 8px;
}
.status-zoom {
    display: flex;
    flex: 1;
    align-items: center;
    padding-left: 29px;
}
.zoom-pct {
    width: 46px;
}
.zoom-circle {
    width: 22px;
    height: 22px;
    border: 1px solid #808080;
    border-radius: 50%;
    font-size: 17px;
    font-weight: 600;
    line-height: 18px;
    text-align: center;
    color: #555;
}
.zoom-track {
    position: relative;
    width: 114px;
    height: 5px;
    margin: 0 14px 0 13px;
    background: #dedede;
}
.zoom-thumb {
    position: absolute;
    left: 48px;
    top: -12px;
    width: 15px;
    height: 23px;
    background: #0078d4;
    clip-path: polygon(0 0, 100% 0, 100% 80%, 50% 100%, 0 80%);
}

/* windows taskbar */
.taskbar {
    display: flex;
    align-items: center;
    height: 51px;
    background: linear-gradient(90deg, #332f2c 0%, #302f2c 40%, #2c3024 75%, #2a2c20 100%);
    color: #f0f0f0;
}
.start {
    display: flex;
    align-items: center;
    justify-content: center;
    width: 62px;
    height: 100%;
    padding-right: 3px;
    background: #2a2422;
}
.search {
    display: flex;
    align-items: center;
    width: 460px;
    height: 100%;
    padding-left: 14px;
    background: #f0f0f0;
    border-top: 2px solid #d8d8d8;
}
.search-text {
    margin-left: 15px;
    font-size: 18.5px;
    color: #3c3c3c;
}
.slot {
    display: flex;
    align-items: center;
    justify-content: center;
    width: 65.5px;
    flex-shrink: 0;
}
.slot-active {
    display: flex;
    align-items: center;
    justify-content: center;
    width: 57px;
    height: 100%;
    background: #565a55;
}
.task-sep {
    width: 4px;
    height: 100%;
    background: #3b3d38;
}
.slot-pin {
    display: flex;
    align-items: center;
    justify-content: center;
    width: 64px;
}
.slot-weather {
    display: flex;
    justify-content: center;
    width: 40px;
    margin-left: 34px;
}
.temp {
    width: 60px;
    padding-left: 6px;
    font-size: 17.5px;
}
.slot-tray {
    display: flex;
    justify-content: center;
    width: 32.5px;
}
.clock {
    display: flex;
    flex-direction: column;
    align-items: center;
    gap: 3px;
    width: 90px;
    font-size: 14.5px;
    line-height: 19px;
}
.slot-notify {
    display: flex;
    justify-content: center;
    width: 58px;
}
.chrome-p {
    font-size: 15px;
    font-weight: 700;
    text-anchor: middle;
    fill: #fff;
}

/* zoom meeting controls */
.zoombar {
    display: grid;
    grid-template-columns: 87px 90px 572px 94px 94px 82px 79px 82px 76px 1fr;
    height: 52px;
    padding: 0 16px 0 2px;
    background: #000;
}
.zb-item {
    position: relative;
    display: flex;
    flex-direction: column;
    align-items: center;
    padding-top: 2px;
}
.zb-unmute {
    height: 48px;
    margin-top: 1px;
    padding-top: 1px;
    background: #222;
    border: 1px solid #f2f2f2;
    border-radius: 7px;
}
.zb-label {
    margin-top: 0;
    font-size: 12px;
    line-height: 16px;
    color: #a9a9a9;
    white-space: nowrap;
}
.zb-bright {
    color: #cfcfcf;
}
.zb-share .zb-label {
    color: #23d959;
}
.zb-caret {
    position: absolute;
    top: 6px;
    right: 3px;
    font-size: 13px;
    color: #bbb;
}
.zb-caret-chat {
    right: 6px;
    top: 7px;
}
.zb-count {
    position: absolute;
    top: 1px;
    left: 60px;
    font-size: 11px;
    color: #a9a9a9;
}
.leave {
    justify-self: end;
    width: 70px;
    height: 28px;
    margin-top: 12px;
    background: #e02828;
    border-radius: 7px;
    font-size: 13px;
    font-weight: 700;
    line-height: 28px;
    text-align: center;
    color: #fff;
}

/* floating overlays from the meeting client */
.shield {
    position: absolute;
    left: 8px;
    top: 8px;
    display: flex;
    align-items: center;
    justify-content: center;
    width: 21px;
    height: 22px;
    background: #1e1e1e;
    border-radius: 5px;
}
.rec-pill {
    position: absolute;
    left: 34px;
    top: 8px;
    display: flex;
    align-items: center;
    width: 48px;
    height: 22px;
    padding-left: 9px;
    background: #262626;
    border-radius: 6px;
    font-size: 10.5px;
    color: #d8d8d8;
}
.rec-dot {
    width: 6px;
    height: 6px;
    margin-right: 4px;
    border-radius: 50%;
    background: #f03a3a;
}
.viewing {
    position: absolute;
    left: 721px;
    top: 0;
    display: flex;
    height: 23px;
}
.viewing-msg {
    display: flex;
    align-items: center;
    width: 353px;
    padding-left: 10px;
    background: #22d45a;
    border-bottom-left-radius: 4px;
    color: #14402a;
}
.viewing-text {
    width: 277px;
    font-size: 14.8px;
    white-space: nowrap;
}
.viewing-dot {
    width: 6px;
    height: 6px;
    margin-left: 11px;
    border-radius: 50%;
    background: #f0605a;
}
.viewing-rec {
    margin-left: 7px;
    font-size: 10px;
    font-weight: 700;
}
.view-options {
    display: flex;
    align-items: center;
    gap: 6px;
    width: 125px;
    padding-left: 8px;
    background: #23262b;
    border-bottom-right-radius: 4px;
    font-size: 14.8px;
    color: #fff;
    white-space: nowrap;
}
.mic-pop {
    position: absolute;
    left: 932px;
    top: 27px;
    display: flex;
    width: 57px;
    height: 31px;
    border: 1px solid #f5a623;
}
.mic-pop-app {
    display: flex;
    align-items: center;
    justify-content: center;
    width: 29px;
    background: #fff;
}
.mic-pop-mic {
    display: flex;
    flex: 1;
    align-items: center;
    justify-content: center;
    background: #f5a623;
}
.view-btn {
    position: absolute;
    left: 1854px;
    top: 13px;
    display: flex;
    align-items: center;
    gap: 5px;
    width: 58px;
    height: 22px;
    padding-left: 8px;
    background: rgba(48, 48, 48, 0.95);
    border-radius: 7px;
    font-size: 13px;
    color: #c8c8c8;
}
.talking {
    position: absolute;
    left: 1646px;
    top: 44px;
    width: 264px;
    height: 51px;
    padding: 30px 0 0 12px;
    background: rgba(0, 0, 0, 0.8);
    border-radius: 8px;
    font-size: 13px;
    line-height: 18px;
    color: #fff;
}
.pointer {
    position: absolute;
    left: 554px;
    top: 162px;
}
.activate {
    position: absolute;
    left: 1482px;
    top: 868px;
    color: #bdbdbd;
}
.activate-title {
    font-size: 25.8px;
    line-height: 36px;
    color: #c9c9c9;
}
.activate-sub {
    font-size: 19px;
    line-height: 26px;
    color: #b0b0b0;
    white-space: nowrap;
}
```
